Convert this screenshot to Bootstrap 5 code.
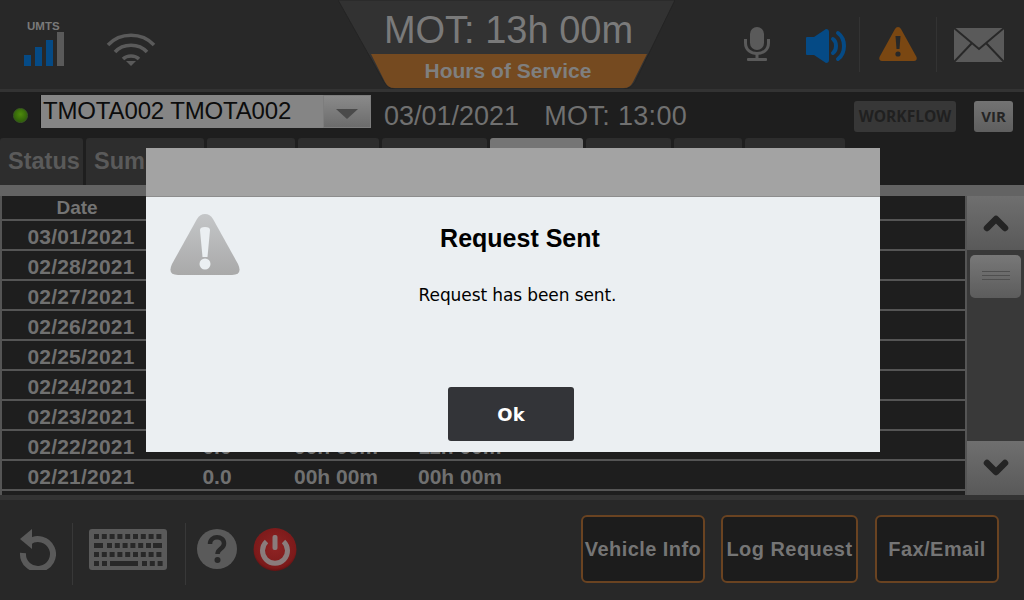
<!DOCTYPE html>
<html lang="en">
<head>
    <meta charset="UTF-8">
    <meta name="viewport" content="width=device-width, initial-scale=1.0">
    <title>Hours of Service</title>
    <link href="https://cdn.jsdelivr.net/npm/bootstrap@5.3.0/dist/css/bootstrap.min.css" rel="stylesheet">
    <style>
        html, body { margin: 0; background: #1e1e1e; }
        .screen { width: 1024px; height: 600px; overflow: hidden; position: relative; font-family: "Liberation Sans", Arial, sans-serif; background: #1e1e1e; }

        .top-bar { height: 92px; background: #282828; border-bottom: 3px solid #333; position: relative; flex: none; }
        .top-left { width: 338px; padding-left: 22px; gap: 38px; padding-top: 20px; }
        .signal-box { width: 46px; height: 48px; }
        .trap { width: 337px; height: 89px; position: relative; }
        .trap-bg { position: absolute; left: 0; top: 0; }
        .trap-title { position: relative; font-size: 38px; line-height: 38px; padding-top: 11px; color: #7a7a7a; text-align: center; margin-left: 4px; }
        .trap-sub { position: relative; font-size: 21px; font-weight: 700; line-height: 24px; padding-top: 10px; color: #7f7f7f; text-align: center; margin-left: 3px; }
        .top-right { flex: 1; position: relative; }
        .mic-icon { margin-left: 69px; }
        .spk-icon { margin-left: 36px; }
        .v-rule { width: 1px; height: 55px; background: #333; }

        .info-bar { height: 46px; flex: none; padding: 3px 0 0 13px; }
        .led { width: 15px; height: 15px; border-radius: 50%; background: radial-gradient(circle at 50% 40%, #4e8a0c, #2f5f0a 75%); border: 1px solid #3b5c22; margin-right: 13px; margin-top: -3px; }
        .driver-select { width: 331px; height: 33px; background: #858585; border-left: 1px solid #111; padding-left: 2px; font-size: 24px; line-height: 31px; color: #0c0c0c; position: relative; letter-spacing: -.15px; margin-left: -1px; }
        .drop-btn { position: absolute; right: 0; top: 0; width: 48px; height: 33px; background: linear-gradient(#8a8a8a, #6c6c6c); border: 1px solid #7d7d7d; }
        .drop-btn i { display: block; width: 0; height: 0; margin: 13px auto 0; border: solid transparent; border-width: 10px 11px 0; border-top-color: #4a4a4a; }
        .date-text { font-size: 27px; line-height: 33px; color: #707070; margin-left: 13px; padding-top: 5px; white-space: nowrap; }
        .mot-text { margin-left: 25px; letter-spacing: .35px; }
        .flow-btn { height: 31px; border-radius: 3px; font-family: "Open Sans", sans-serif; font-weight: 700; line-height: 31px; text-align: center; margin-top: 6px; }
        .flow-a { width: 102px; margin-left: auto; background: #373737; color: #202020; font-size: 15.5px; }
        .flow-b { width: 39px; margin: 6px 11px 0 18px; background: linear-gradient(#737373, #5f5f5f); color: #242424; font-size: 15px; }

        .tab-row { height: 47px; flex: none; gap: 3px; }
        .tab-item { background: #2d2d2d; border-radius: 3px 3px 0 0; font-size: 23.5px; font-weight: 700; color: #5a5a5a; line-height: 47px; padding-left: 8px; overflow: hidden; white-space: nowrap; }
        .tab-on { background: #757575; }

        .strip { height: 11px; flex: none; background: #636363; }
        .grid-area { height: 299px; flex: none; background: #1e1e1e; }
        .grid-wrap { width: 967px; border-left: 2px solid #555; border-right: 2px solid #555; height: 299px; overflow: hidden; }
        .log-grid { table-layout: fixed; width: 963px; border-collapse: separate; border-spacing: 0; font-size: 21px; font-weight: 700; color: #707070; line-height: 1; }
        .log-grid td, .log-grid th { box-sizing: border-box; height: 30px; padding: 2px 0 0; text-align: center; border-bottom: 2px solid #555; white-space: nowrap; }
        .log-grid td:first-child { padding-left: 8px; letter-spacing: .2px; }
        .log-grid th { height: 25px; font-size: 19px; padding: 0; color: #747474; }

        .scroll-col { width: 57px; background: #393939; position: relative; }
        .scroll-btn { height: 54px; background: linear-gradient(#6f6f6f, #595959); }
        .scroll-thumb { width: 51px; height: 43px; border-radius: 5px; margin: 5px 0 0 3px; background: linear-gradient(#787878, #5c5c5c); padding-top: 16px; }
        .scroll-thumb i { display: block; height: 1px; width: 28px; margin: 0 auto 3px; background: #4f4f4f; }
        .scroll-gap { height: 143px; }

        .bottom-bar { flex: 1; background: #282828; border-top: 5px solid #333; position: relative; }
        .undo-icon { margin: 29px 0 0 19px; }
        .bot-rule { width: 1px; height: 62px; background: #383838; margin-top: 23px; }
        .act-btn { height: 68px; margin-top: 15px; background: #1c1c1c; border: 2px solid #6a4321; border-radius: 6px; color: #757575; font-size: 20px; font-weight: 700; line-height: 64px; text-align: center; letter-spacing: .45px; white-space: nowrap; padding: 0; }

        .dlg { position: absolute; left: 146px; top: 148px; width: 734px; height: 304px; background: #ebeff2; }
        .dlg-head { height: 49px; background: #a3a3a3; border-bottom: 1px solid #8d8d8d; }
        .dlg-body { position: relative; height: 255px; }
        .dlg-warn { position: absolute; left: 24px; top: 17px; }
        .dlg-title { font-size: 25px; font-weight: 700; line-height: 28px; color: #000; text-align: center; padding: 27px 0 0 14px; margin: 0; font-family: "Liberation Sans", Arial, sans-serif; }
        .dlg-msg { font-size: 17px; line-height: 20px; color: #000; text-align: center; padding: 33px 0 0 9px; margin: 0; font-family: "DejaVu Sans", sans-serif; letter-spacing: -.1px; }
        .dlg-ok { position: absolute; left: 302px; top: 190px; width: 126px; height: 54px; background: #333438; color: #fff; border: 0; border-radius: 3px; font-size: 18px; font-weight: 700; font-family: "DejaVu Sans", sans-serif; }
    </style>
</head>
<body>
<div class="screen d-flex flex-column">

    <!-- top bar -->
    <div class="top-bar d-flex">
        <div class="top-left d-flex">
            <svg class="signal-box" viewBox="0 0 46 48">
                <text x="5" y="10" font-size="11.500" font-weight="700" fill="#7a7a7a" font-family="Liberation Sans">UMTS</text>
                <rect x="2" y="35" width="7" height="11" fill="#054a85"/>
                <rect x="13" y="27" width="7" height="19" fill="#054a85"/>
                <rect x="24" y="20" width="7" height="26" fill="#054a85"/>
                <rect x="35" y="12" width="7" height="34" fill="#5a5a5a"/>
            </svg>
            <svg width="50" height="36" viewBox="0 0 50 36" style="margin-top:11px" fill="none" stroke="#5a5a5a" stroke-width="3.500">
                <path d="M2 14 C14 1 36 1 48 14"/>
                <path d="M9 21 C17 12 33 12 41 21"/>
                <path d="M17 28 C21 24 29 24 33 28"/>
                <path d="M20 30 L25 35 L30 30 Z" fill="#5a5a5a" stroke="none"/>
            </svg>
        </div>
        <div class="trap">
            <svg class="trap-bg" width="337" height="89" viewBox="0 0 337 89">
                <path d="M0 0 H337 L297 82 Q293 89 285 89 H57 Q50 89 46 82 Z" fill="#323232" stroke="#242424"/>
                <path d="M33 54 H309 L295 82 Q292 88 286 88 H56 Q50 88 47 82 Z" fill="#754a20"/>
            </svg>
            <div class="trap-title">MOT: 13h 00m</div>
            <div class="trap-sub">Hours of Service</div>
        </div>
        <div class="top-right d-flex align-items-start pt-3">
            <svg class="mic-icon" width="26" height="34" viewBox="0 0 26 34" style="margin-top:11px">
                <rect x="6" y="0" width="14" height="23" rx="7" fill="#5a5a5a"/>
                <path d="M1.5 12 V16 C1.5 23 7 26.5 13 26.5 C19 26.5 24.5 23 24.5 16 V12" fill="none" stroke="#5a5a5a" stroke-width="3"/>
                <rect x="11.500" y="26" width="3" height="6" fill="#5a5a5a"/>
                <rect x="3" y="31" width="20" height="3" rx="1" fill="#5a5a5a"/>
            </svg>
            <svg class="spk-icon" width="41" height="34" viewBox="0 0 41 34" style="margin-top:13px">
                <path d="M0 9 Q0 8 1 8 H8 L20 0 Q23 0 23 3 V31 Q23 34 20 34 L8 26 H1 Q0 26 0 25 Z" fill="#054a85"/>
                <path d="M27 10 C31 13 31 21 27 24" fill="none" stroke="#054a85" stroke-width="4" stroke-linecap="round"/>
                <path d="M32 4 C40 10 40 24 32 30" fill="none" stroke="#054a85" stroke-width="4" stroke-linecap="round"/>
            </svg>
            <div class="v-rule" style="margin-left:12px;margin-top:1px"></div>
            <svg width="38" height="34" viewBox="0 0 38 34" style="margin:11px 0 0 19px">
                <path d="M19 0 Q21 0 22 2 L37.500 30 Q38.500 34 35 34 H3 Q-.5 34 .5 30 L16 2 Q17 0 19 0 Z" fill="#7a4712"/>
                <path d="M16.500 9 H21.500 L20.500 22 H17.500 Z" fill="#282828"/>
                <circle cx="19" cy="27" r="2.600" fill="#282828"/>
            </svg>
            <div class="v-rule" style="margin-left:19px;margin-top:1px"></div>
            <svg width="50" height="34" viewBox="0 0 50 34" style="margin:12px 0 0 17px">
                <rect width="50" height="34" fill="#5a5a5a"/>
                <path d="M0 0 L25 21 L50 0 M0 34 L18 15 M50 34 L32 15" fill="none" stroke="#282828" stroke-width="2"/>
            </svg>
        </div>
    </div>

    <!-- driver row -->
    <div class="info-bar d-flex">
        <div class="led align-self-center"></div>
        <div class="driver-select">TMOTA002 TMOTA002<div class="drop-btn"><i></i></div></div>
        <div class="date-text">03/01/2021<span class="mot-text">MOT: 13:00</span></div>
        <div class="flow-btn flow-a">WORKFLOW</div>
        <div class="flow-btn flow-b">VIR</div>
    </div>

    <!-- tabs -->
    <div class="tab-row d-flex">
        <div class="tab-item" style="width:83px">Status</div>
        <div class="tab-item" style="width:118px">Summary</div>
        <div class="tab-item" style="width:88px"></div>
        <div class="tab-item" style="width:81px"></div>
        <div class="tab-item" style="width:105px"></div>
        <div class="tab-item tab-on" style="width:93px"></div>
        <div class="tab-item" style="width:85px"></div>
        <div class="tab-item" style="width:68px"></div>
        <div class="tab-item" style="width:100px"></div>
    </div>
    <div class="strip"></div>

    <!-- log table with scroll buttons -->
    <div class="grid-area d-flex">
        <div class="grid-wrap">
            <table class="log-grid">
                <colgroup><col style="width:150px"><col style="width:130px"><col style="width:108px"><col style="width:140px"><col></colgroup>
                <thead><tr><th>Date</th><th></th><th></th><th></th><th></th></tr></thead>
                <tbody>
                    <tr><td>03/01/2021</td><td>0.0</td><td>00h 00m</td><td>00h 00m</td><td></td></tr>
                    <tr><td>02/28/2021</td><td>0.0</td><td>00h 00m</td><td>00h 00m</td><td></td></tr>
                    <tr><td>02/27/2021</td><td>0.0</td><td>00h 00m</td><td>00h 00m</td><td></td></tr>
                    <tr><td>02/26/2021</td><td>0.0</td><td>00h 00m</td><td>00h 00m</td><td></td></tr>
                    <tr><td>02/25/2021</td><td>0.0</td><td>00h 00m</td><td>00h 00m</td><td></td></tr>
                    <tr><td>02/24/2021</td><td>0.0</td><td>00h 00m</td><td>00h 00m</td><td></td></tr>
                    <tr><td>02/23/2021</td><td>0.0</td><td>00h 00m</td><td>00h 00m</td><td></td></tr>
                    <tr><td>02/22/2021</td><td>0.0</td><td>00h 00m</td><td>11h 00m</td><td></td></tr>
                    <tr><td>02/21/2021</td><td>0.0</td><td>00h 00m</td><td>00h 00m</td><td></td></tr>
                </tbody>
            </table>
        </div>
        <div class="scroll-col">
            <div class="scroll-btn d-flex align-items-center justify-content-center">
                <svg width="26" height="18" viewBox="0 0 26 18"><path d="M4 14 L13 5 L22 14" fill="none" stroke="#242424" stroke-width="6.500" stroke-linecap="round" stroke-linejoin="round"/></svg>
            </div>
            <div class="scroll-thumb"><i></i><i></i><i></i></div>
            <div class="scroll-gap"></div>
            <div class="scroll-btn d-flex align-items-center justify-content-center">
                <svg width="26" height="18" viewBox="0 0 26 18"><path d="M4 4 L13 13 L22 4" fill="none" stroke="#242424" stroke-width="6.500" stroke-linecap="round" stroke-linejoin="round"/></svg>
            </div>
        </div>
    </div>

    <!-- bottom bar -->
    <div class="bottom-bar d-flex">
        <svg class="undo-icon" width="37" height="41" viewBox="0 0 37 41">
            <path d="M10 13 A15 15 0 1 1 4 24" fill="none" stroke="#5a5a5a" stroke-width="6"/>
            <path d="M13 0 V20 L1 10 Z" fill="#5a5a5a"/>
        </svg>
        <div class="bot-rule" style="margin-left:16px"></div>
        <svg width="78" height="41" viewBox="0 0 78 41" style="margin:29px 0 0 16px">
            <rect width="78" height="41" rx="3" fill="#5a5a5a"/>
            <g fill="#282828" id="keys"></g>
        </svg>
        <div class="bot-rule" style="margin-left:18px"></div>
        <svg width="40" height="40" viewBox="0 0 40 40" style="margin:29px 0 0 11px">
            <circle cx="20" cy="20" r="20" fill="#5a5a5a"/>
            <path d="M13 15 C13 6 27 6 27 14.500 C27 20 20.500 19.500 20.500 25" fill="none" stroke="#282828" stroke-width="4.500"/>
            <circle cx="20.500" cy="31" r="3" fill="#282828"/>
        </svg>
        <svg width="44" height="45" viewBox="0 0 44 45" style="margin:27px 0 0 16px">
            <defs><radialGradient id="pw" cx=".5" cy=".45" r=".6"><stop offset="0" stop-color="#8f2424"/><stop offset=".8" stop-color="#7c1a1a"/><stop offset="1" stop-color="#4e0c0c"/></radialGradient></defs>
            <circle cx="22" cy="22.500" r="21.500" fill="url(#pw)"/>
            <path d="M13.500 14.500 A12.500 12.500 0 1 0 30.500 14.500" fill="none" stroke="#8a7c7c" stroke-width="5"/>
            <rect x="19.500" y="8" width="5" height="15" rx="2" fill="#8a7c7c"/>
        </svg>
        <button class="act-btn" style="width:124px;margin-left:284px">Vehicle Info</button>
        <button class="act-btn" style="width:137px;margin-left:16px">Log Request</button>
        <button class="act-btn" style="width:124px;margin-left:17px">Fax/Email</button>
    </div>

    <!-- dialog -->
    <div class="dlg">
        <div class="dlg-head"></div>
        <div class="dlg-body">
            <svg class="dlg-warn" width="70" height="61" viewBox="0 0 70 61">
                <defs><linearGradient id="wg" x1="0" y1="0" x2="0" y2="1"><stop offset="0" stop-color="#c4c6c8"/><stop offset="1" stop-color="#a9a9a9"/></linearGradient></defs>
                <path d="M35 0 Q40 0 43 5 L68 50 Q73 61 62 61 H8 Q-3 61 2 50 L27 5 Q30 0 35 0 Z" fill="url(#wg)"/>
                <path d="M30 16 Q30 13 35 13 Q40 13 40 16 L37.500 43 H32.500 Z" fill="#ebeff2"/>
                <circle cx="35" cy="50" r="5.500" fill="#ebeff2"/>
            </svg>
            <h5 class="dlg-title">Request Sent</h5>
            <p class="dlg-msg">Request has been sent.</p>
            <button class="dlg-ok">Ok</button>
        </div>
    </div>
</div>

<script>
    // keyboard keys, four rows
    let out = "";
    for (let i = 0; i < 9; i++) out += `<rect x="${5 + i * 7.8}" y="5" width="5" height="5"/>`;
    out += `<rect x="5" y="14" width="9" height="5"/>`;
    for (let i = 0; i < 7; i++) out += `<rect x="${18 + i * 7.8}" y="14" width="5" height="5"/>`;
    out += `<rect x="64" y="14" width="9" height="5"/>`;
    for (let i = 0; i < 9; i++) out += `<rect x="${5 + i * 7.8}" y="23" width="5" height="5"/>`;
    out += `<rect x="5" y="32" width="5" height="5"/><rect x="13" y="32" width="5" height="5"/><rect x="21" y="32" width="28" height="5"/>`;
    for (let i = 0; i < 3; i++) out += `<rect x="${53 + i * 7.8}" y="32" width="5" height="5"/>`;
    document.getElementById("keys").innerHTML = out;
</script>
<script src="https://cdn.jsdelivr.net/npm/bootstrap@5.3.0/dist/js/bootstrap.bundle.min.js"></script>
</body>
</html>
